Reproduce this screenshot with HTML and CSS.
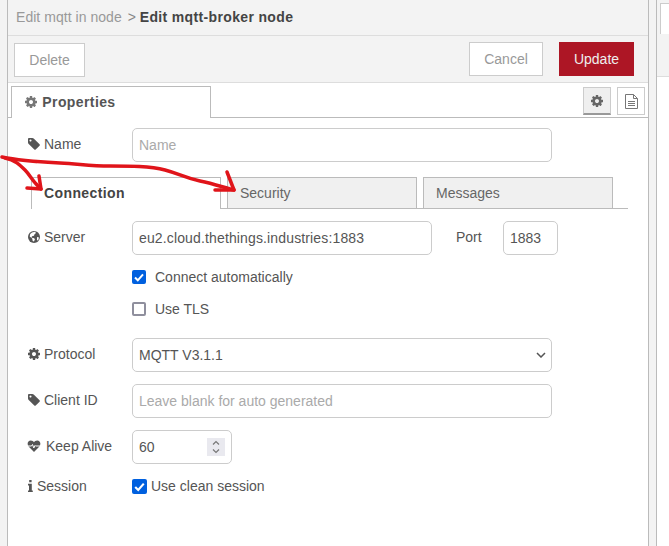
FILE: index.html
```html
<!DOCTYPE html>
<html lang="en">

<head>
    <meta charset="UTF-8">
    <title>Edit mqtt-broker node</title>
    <link rel="stylesheet" href="styles.css">
</head>

<body>
    <svg width="0" height="0" class="defs">
        <defs>
            <symbol id="i-cog" viewBox="0 0 1792 1792"><path d="M1152 896q0-106-75-181t-181-75-181 75-75 181 75 181 181 75 181-75 75-181zm512-109v222q0 12-8 23t-20 13l-185 28q-19 54-39 91 35 50 107 138 10 12 10 25t-9 23q-27 37-99 108t-94 71q-12 0-26-9l-138-108q-44 23-91 38-16 136-29 186-7 28-36 28h-222q-14 0-24.500-8.500t-11.500-21.500l-28-184q-49-16-90-37l-141 107q-10 9-25 9-14 0-25-11-126-114-165-168-7-10-7-23 0-12 8-23 15-21 51-66.500t54-70.500q-27-50-41-99l-183-27q-13-2-21-12.500t-8-23.500v-222q0-12 8-23t19-13l186-28q14-46 39-92-40-57-107-138-10-12-10-24 0-10 9-23 26-36 98.500-107.500t94.500-71.500q13 0 26 10l138 107q44-23 91-38 16-136 29-186 7-28 36-28h222q14 0 24.500 8.500t11.500 21.500l28 184q49 16 90 37l142-107q9-9 24-9 13 0 25 10 129 119 165 170 7 8 7 22 0 12-8 23-15 21-51 66.500t-54 70.500q26 50 41 98l183 28q13 2 21 12.500t8 23.500z"/></symbol>
            <symbol id="i-tag" viewBox="0 0 1792 1792"><path d="M576 448q0-53-37.500-90.500t-90.500-37.500-90.500 37.500-37.500 90.500 37.500 90.500 90.500 37.500 90.500-37.500 37.500-90.500zm1067 576q0 53-37 90l-491 492q-39 37-91 37-53 0-90-37l-715-716q-38-37-64.500-101t-26.500-117v-416q0-52 38-90t90-38h416q53 0 117 26.500t102 64.500l715 714q37 39 37 91z"/></symbol>
        </defs>
    </svg>

    <div class="gutter"></div>

    <main class="tray">
        <div class="tray-title">
            <span class="crumb">Edit mqtt in node</span>
            <span class="crumb-sep">&gt;</span>
            <strong class="title-now">Edit mqtt-broker node</strong>
        </div>

        <div class="tray-toolbar">
            <button class="btn btn-delete">Delete</button>
            <span class="spacer"></span>
            <button class="btn btn-cancel">Cancel</button>
            <button class="btn btn-update">Update</button>
        </div>

        <div class="tray-tabs">
            <div class="tray-tab">
                <svg class="icon icon-tab"><use href="#i-cog"/></svg>
                Properties
            </div>
            <span class="spacer"></span>
            <div class="side-btn side-btn-on">
                <svg class="icon icon-side"><use href="#i-cog"/></svg>
            </div>
            <div class="side-btn">
                <svg class="doc" width="13" height="15" viewBox="0 0 13 15">
                    <path d="M.5 .5h8l4 4v10h-12z M8.500 .5v4h4 M3 7.500h7 M3 9.500h7 M3 11.500h7" />
                </svg>
            </div>
        </div>

        <form class="form">
            <div class="row row-name">
                <label class="label"><svg class="icon"><use href="#i-tag"/></svg>Name</label>
                <input class="input input-wide" type="text" placeholder="Name">
            </div>

            <div class="sub-tabs">
                <div class="sub-tab sub-tab-on">Connection</div>
                <div class="sub-tab">Security</div>
                <div class="sub-tab">Messages</div>
            </div>

            <div class="row row-server">
                <label class="label">
                    <svg class="icon" viewBox="0 0 14 14">
                        <circle cx="7" cy="7" r="6" />
                        <path class="cut" d="M5 2.500l3-.8 1 1.300-1.500 1.200-.5 1.500-2 .5-.5 1.500 2 .3 1.500 1-1 2.500-1.300-.5-.5-2.500-2.500-2 .5-2.500z M10 7l2 .5-.7 2.500-1.300.5z" />
                    </svg>Server
                </label>
                <input class="input input-server" type="text" value="eu2.cloud.thethings.industries:1883">
                <label class="port-label">Port</label>
                <input class="input input-port" type="text" value="1883">
            </div>

            <div class="check-row check-connect">
                <input class="check" type="checkbox" checked>
                <span>Connect automatically</span>
            </div>
            <div class="check-row check-tls">
                <input class="check" type="checkbox">
                <span>Use TLS</span>
            </div>

            <div class="row row-protocol">
                <label class="label"><svg class="icon"><use href="#i-cog"/></svg>Protocol</label>
                <select class="input input-wide select">
                    <option>MQTT V3.1.1</option>
                </select>
            </div>

            <div class="row row-next">
                <label class="label"><svg class="icon"><use href="#i-tag"/></svg>Client ID</label>
                <input class="input input-wide" type="text" placeholder="Leave blank for auto generated">
            </div>

            <div class="row row-next">
                <label class="label">
                    <svg class="icon icon-heart" viewBox="0 0 14 13">
                        <path d="M7 12.500l-5.200-5.300c-2.300-2.500-1-6.200 2-6.200 1.500 0 2.500.8 3.200 1.800.7-1 1.700-1.800 3.200-1.800 3 0 4.300 3.700 2 6.200z" />
                        <path class="pulse" d="M1 6.500h3.500l1-1.500 1.300 3.500 1.200-2.500.5.500h4.500" />
                    </svg>Keep Alive
                </label>
                <input class="input input-number" type="number" value="60">
            </div>

            <div class="row row-session">
                <label class="label">
                    <svg class="icon icon-info" viewBox="0 0 5 12">
                        <path d="M1.200 0h2.400v2.200h-2.400z M0 3.800h3.800v6.600h1v1.600h-4.800v-1.600h1v-5h-1z" />
                    </svg>Session
                </label>
                <input class="check check-session" type="checkbox" checked>
                <span>Use clean session</span>
            </div>
        </form>
    </main>

    <div class="gutter gutter-right"></div>

    <aside class="sidebar">
        <div class="sidebar-top">
            <div class="sidebar-tab"></div>
        </div>
    </aside>

    <!-- hand drawn arrows on top of the screenshot -->
    <svg class="scribble" width="669" height="546" viewBox="0 0 669 546">
        <path d="M2 157C20 161 40 162 60 163S90 166 110 166 150 166 165 170 185 178 200 181 225 188 234 190" />
        <path d="M5 158C15 160 20 165 25 170S33 182 41 189" />
        <path d="M39 176l2 13-14-1" />
        <path d="M227 172l7 18-19 0" />
    </svg>
</body>

</html>
```

FILE: styles.css
```css
* {
    box-sizing: border-box;
}

body {
    margin: 0;
    height: 546px;
    overflow: hidden;
    display: flex;
    font-family: 'Liberation Sans', Arial, sans-serif;
    font-size: 14px;
    color: #555;
    background: #fff;
}

.defs {
    position: absolute;
}

.gutter {
    width: 8px;
    flex: none;
    background: #f3f3f3;
    border-right: 1px solid #bbb;
}

.tray {
    width: 641px;
    flex: none;
    border-right: 1px solid #bbb;
}

.tray-title {
    height: 36px;
    padding: 0 8px;
    background: #f3f3f3;
    border-bottom: 1px solid #ddd;
    line-height: 34px;
    color: #444;
}

.crumb {
    color: #999;
    letter-spacing: .04px;
}

.crumb-sep {
    color: #888;
    margin: 0 0 0 2px;
}

.title-now {
    letter-spacing: .35px;
}

.tray-toolbar {
    height: 47px;
    padding: 6px 14px 0 6px;
    background: #f3f3f3;
    border-bottom: 1px solid #ddd;
    display: flex;
    align-items: flex-start;
}

.spacer {
    flex: 1;
}

.btn {
    height: 34px;
    font: 14px 'Liberation Sans', Arial, sans-serif;
    background: #fff;
    border: 1px solid #ccc;
    color: #999;
    padding: 0;
}

.btn-delete {
    width: 71px;
    margin-top: 1px;
}

.btn-cancel {
    width: 74px;
    margin-right: 16px;
}

.btn-update {
    width: 75px;
    background: #ad1625;
    border-color: #ad1625;
    color: #eee;
}

.tray-tabs {
    height: 35px;
    padding: 3px 3px 0 3px;
    border-bottom: 1px solid #bbb;
    display: flex;
    align-items: flex-start;
}

.tray-tab {
    width: 200px;
    height: 32px;
    padding-left: 12px;
    border: 1px solid #bbb;
    border-bottom: 0;
    background: #fff;
    font-weight: bold;
    line-height: 30px;
    color: #555;
    letter-spacing: .4px;
}

.side-btn {
    width: 28px;
    height: 28px;
    margin: 1px 0 0 6px;
    border: 1px solid #ccc;
    display: flex;
    align-items: center;
    justify-content: center;
}

.side-btn-on {
    background: #efefef;
    border-bottom: 2px solid #999;
}

.icon {
    width: 14px;
    height: 14px;
    margin: 0 3px 0 -1px;
    fill: #555;
    vertical-align: -2px;
}

.icon-tab {
    fill: #777;
    margin: 0;
}

.icon-side {
    fill: #666;
    margin: 0;
}

.doc {
    fill: none;
    stroke: #777;
}

.form {
    padding: 10px 0 0 20px;
}

.row {
    display: flex;
    align-items: flex-start;
}

.label {
    width: 104px;
    flex: none;
    line-height: 32px;
    white-space: nowrap;
}

.input {
    height: 34px;
    padding: 0 6px;
    border: 1px solid #ccc;
    border-radius: 5px;
    background: #fff;
    color: #555;
    font: 14px 'Liberation Sans', Arial, sans-serif;
    outline: none;
}

.input::placeholder {
    color: #aaa;
    opacity: 1;
}

.input-wide {
    width: 420px;
}

.input-server {
    width: 300px;
    letter-spacing: .14px;
}

.port-label {
    width: 71px;
    padding-left: 24px;
    line-height: 32px;
    flex: none;
}

.input-port {
    width: 55px;
}

.input-number {
    width: 100px;
}

.input-number::-webkit-inner-spin-button {
    -webkit-appearance: none;
    appearance: none;
    opacity: 1;
    width: 18px;
    height: 18px;
    background: #e9e9ef url("data:image/svg+xml,%3Csvg xmlns='http://www.w3.org/2000/svg' width='18' height='18'%3E%3Cpath d='M6 6.500l3-3 3 3M6 11.500l3 3 3-3' fill='none' stroke='%23777' stroke-width='1.200'/%3E%3C/svg%3E") no-repeat center;
}

.select {
    -webkit-appearance: none;
    appearance: none;
    background: #fff url("data:image/svg+xml,%3Csvg xmlns='http://www.w3.org/2000/svg' width='10' height='6'%3E%3Cpath d='M1 1l4 4 4-4' fill='none' stroke='%23555' stroke-width='1.500'/%3E%3C/svg%3E") no-repeat right 5px center;
}

.sub-tabs {
    margin: 15px 0 12px 3px;
    width: 597px;
    height: 32px;
    border-bottom: 1px solid #bbb;
    display: flex;
    gap: 6px;
}

.sub-tab {
    width: 190px;
    height: 31px;
    padding-left: 12px;
    border: 1px solid #bbb;
    border-bottom: 0;
    background: #f0f0f0;
    color: #666;
    line-height: 30px;
}

.sub-tab-on {
    height: 32px;
    background: #fff;
    color: #444;
    font-weight: bold;
    letter-spacing: .4px;
}

.check-row {
    padding-left: 104px;
    display: flex;
    align-items: center;
    height: 16px;
}

.check-connect {
    margin-top: 14px;
}

.check-tls {
    margin-top: 16px;
}

.check {
    -webkit-appearance: none;
    appearance: none;
    width: 14px;
    height: 14px;
    margin: 0 9px 0 0;
    flex: none;
    border: 2px solid #8f8f9d;
    border-radius: 2px;
    background: #fff;
}

.check:checked {
    border: 0;
    background: #0060df url("data:image/svg+xml,%3Csvg xmlns='http://www.w3.org/2000/svg' viewBox='0 0 14 14'%3E%3Cpath d='M3 7.500l2.800 2.800 5.200-6' fill='none' stroke='%23fff' stroke-width='2'/%3E%3C/svg%3E") no-repeat center / 100%;
}

.row-protocol {
    margin-top: 21px;
}

.row-next {
    margin-top: 12px;
}

.row-session {
    margin-top: 14px;
    height: 16px;
    align-items: center;
}

.row-session .label {
    line-height: 16px;
}

.check-session {
    width: 15px;
    height: 15px;
    margin-right: 4px;
}

.icon-heart {
    margin-right: 5px;
}

.pulse {
    fill: none;
    stroke: #fff;
    stroke-width: 1;
}

.icon-info {
    width: 5px;
    margin: 0 4px 0 0;
}

.cut {
    fill: #fff;
}

.sidebar {
    flex: 1;
}

.sidebar-top {
    height: 77px;
    padding: 3px 0 42px 3px;
    background: #f3f3f3;
    border-bottom: 1px solid #ddd;
}

.sidebar-tab {
    height: 31px;
    background: #fff;
    border: 1px solid #ccc;
    border-width: 1px 0 0 1px;
}

.scribble {
    position: absolute;
    top: 0;
    left: 0;
    fill: none;
    stroke: #e0141a;
    stroke-width: 3.500;
    stroke-linecap: round;
    stroke-linejoin: round;
}
```
